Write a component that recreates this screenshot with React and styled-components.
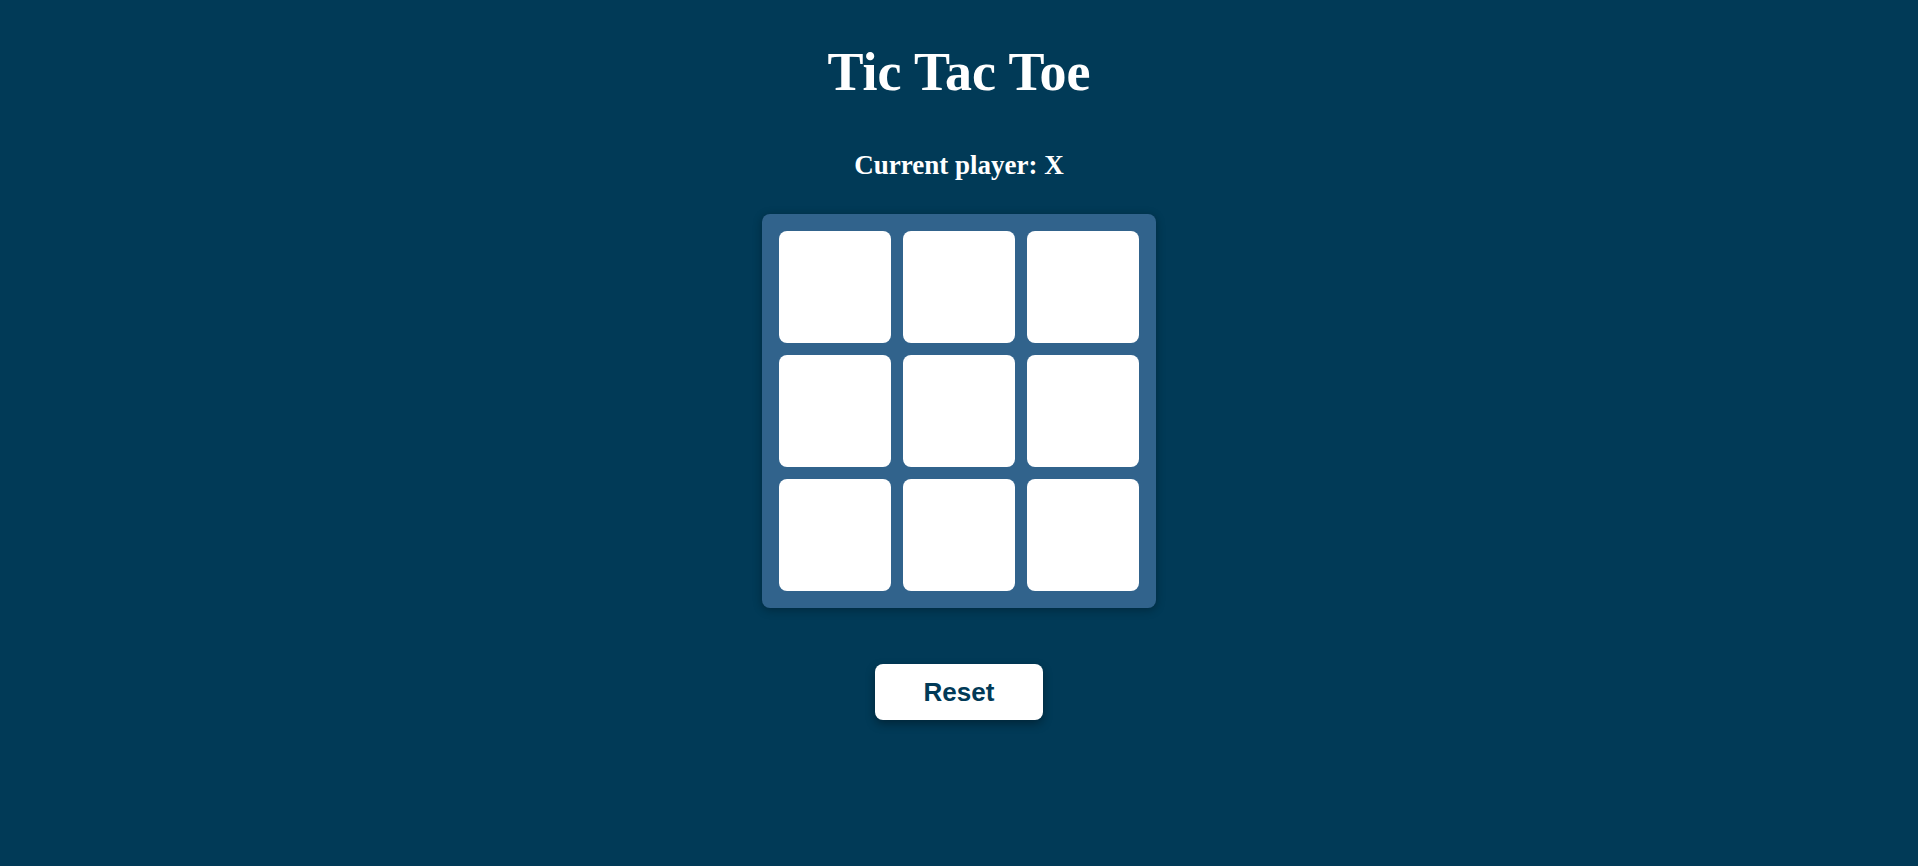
import styled, { createGlobalStyle } from "styled-components";

const GlobalStyle = createGlobalStyle`
    html, body {
        margin: 0;
        padding: 0;
        background-color: #013a57;
        min-height: 100%;
    }
`;

const Page = styled.div`
    min-height: 866px;
    display: flex;
    flex-direction: column;
    align-items: center;
    padding-top: 41px;
    box-sizing: border-box;
    background-color: #013a57;
    font-family: "Liberation Serif", "Times New Roman", serif;
    color: #fff;
`;

const Title = styled.h1`
    margin: 0;
    font-size: 54px;
    font-weight: bold;
`;

const Status = styled.h2`
    margin: 47px 0 0;
    font-size: 27px;
    font-weight: bold;
`;

const Board = styled.div`
    margin-top: 33px;
    display: grid;
    grid-template-columns: repeat(3, 112px);
    grid-template-rows: repeat(3, 112px);
    gap: 12px;
    padding: 17px;
    background-color: #31638c;
    border-radius: 8px;
    box-shadow: 0 2px 10px rgba(0, 0, 0, 0.3);
`;

const Cell = styled.button`
    border: none;
    border-radius: 8px;
    background-color: #fff;
    padding: 0;
    font-family: "Liberation Sans", Arial, sans-serif;
    font-size: 64px;
    font-weight: bold;
    color: ${(props) => (props.$mark === "O" ? "#31638c" : "#013a57")};
    cursor: pointer;
`;

const ResetButton = styled.button`
    margin-top: 56px;
    width: 168px;
    height: 56px;
    border: none;
    border-radius: 8px;
    background-color: #fff;
    color: #013a57;
    font-family: "Liberation Sans", Arial, sans-serif;
    font-size: 26px;
    font-weight: bold;
    box-shadow: 0 4px 10px rgba(0, 0, 0, 0.35);
    cursor: pointer;
`;

const cells = Array(9).fill(null);

export default function App() {
    return (
        <>
            <GlobalStyle />
            <Page>
                <Title>Tic Tac Toe</Title>
                <Status>Current player: X</Status>
                <Board>
                    {cells.map((value, i) => (
                        <Cell key={i} $mark={value}>{value}</Cell>
                    ))}
                </Board>
                <ResetButton>Reset</ResetButton>
            </Page>
        </>
    );
}
